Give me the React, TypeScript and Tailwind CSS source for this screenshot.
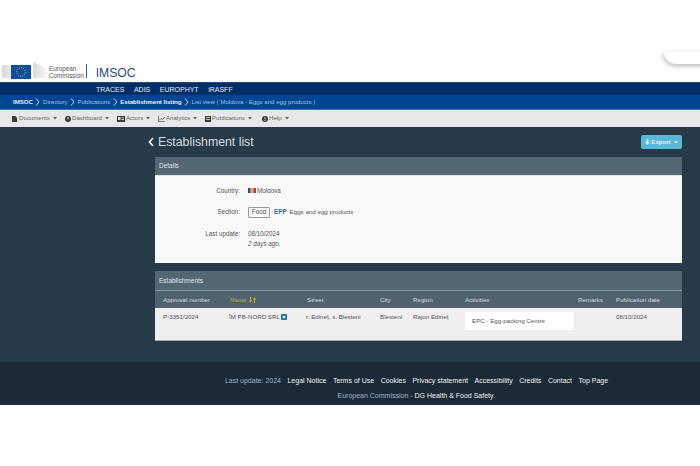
import React from "react";

const font = "font-['Liberation_Sans',Arial,sans-serif]";

function Logo() {
  return (
    <svg width="46" height="18" viewBox="0 0 46 18" className="block">
      <defs>
        <linearGradient id="g1" x1="0" x2="1" y1="0" y2="0">
          <stop offset="0" stopColor="#d9d9d9" />
          <stop offset="1" stopColor="#e8e8e8" />
        </linearGradient>
        <linearGradient id="g2" x1="0" x2="1" y1="0" y2="0">
          <stop offset="0" stopColor="#d8d8d8" />
          <stop offset="1" stopColor="#f8f8f8" />
        </linearGradient>
      </defs>
      <rect x="0" y="3" width="10" height="13" fill="url(#g1)" />
      <rect x="9" y="3" width="20" height="14" fill="#0f4f9e" />
      <circle cx="19" cy="10" r="4.3" fill="none" stroke="#c9c46a" strokeWidth="1" strokeDasharray="1 1.2" />
      <path d="M31 0 L38 3 L45 7 L45 16 L31 16 Z" fill="url(#g2)" />
    </svg>
  );
}

function Sep() {
  return (
    <svg width="5" height="8" viewBox="0 0 5 8" className="mx-[2.5px]">
      <path d="M1 0.5 L4 4 L1 7.5" fill="none" stroke="#c7d9ee" strokeWidth="1" />
    </svg>
  );
}

function Caret({ color = "#666" }: { color?: string }) {
  return (
    <svg width="4" height="2.5" viewBox="0 0 4 2.5" className="ml-[3px]">
      <path d="M0 0 H4 L2 2.5 Z" fill={color} />
    </svg>
  );
}

const ico = "#3a3a3a";

function Th({ w, children }: { w: string; children: React.ReactNode }) {
  return <div className={`${w} shrink-0`}>{children}</div>;
}

export default function App() {
  return (
    <div className={`relative flex h-[466px] w-[700px] flex-col overflow-hidden bg-white ${font}`}>
      {/* stray shadow top right */}
      <div className="absolute left-[664px] top-[52px] h-[12px] w-[60px] rounded-bl-[14px] bg-white shadow-[-1px_2px_5px_rgba(0,0,0,0.28)]" />

      {/* Header */}
      <div className="flex h-[82px] items-end pb-[2px] pl-[2px]">
        <Logo />
        <div className="ml-[1px] flex flex-col pb-[1px] text-[6.3px] leading-[7px] text-[#555]">
          <span>European</span>
          <span>Commission</span>
        </div>
        <div className="ml-[2px] mb-[2px] h-[14px] w-px bg-[#2a5c96]" />
        <span className="ml-[9px] text-[12.2px] leading-[14px] text-[#1f4e86]">IMSOC</span>
      </div>

      {/* Top nav */}
      <div className="flex h-[13px] items-center gap-[9.5px] border-t border-[#1c4f80] bg-[#002f67] pl-[96px] text-[7px] leading-none text-[#e3ecf5]">
        <span>TRACES</span>
        <span>ADIS</span>
        <span>EUROPHYT</span>
        <span>iRASFF</span>
      </div>

      {/* Breadcrumb */}
      <div className="flex h-[15px] items-center border-b border-[#3f76ab] bg-[#004494] pl-[13px] text-[6.1px] leading-none text-[#a9c3e2]">
        <span className="font-bold text-[#e3ecf5]">IMSOC</span>
        <Sep />
        <span>Directory</span>
        <Sep />
        <span>Publications</span>
        <Sep />
        <span className="font-bold text-[#eef3f9]">Establishment listing</span>
        <Sep />
        <span>List view ( Moldova - Eggs and egg products )</span>
      </div>

      {/* Menu */}
      <div className="flex h-[17px] items-center bg-[#e8e7e8] pl-[12px] text-[6.1px] leading-none text-[#666]">
        <div className="flex w-[53px] items-center">
          <svg width="5" height="6" viewBox="0 0 5 6" className="mr-[2px]">
            <path d="M0 0 H3.2 L5 1.8 V6 H0 Z" fill={ico} />
          </svg>
          <span>Documents</span>
          <Caret />
        </div>
        <div className="flex w-[52px] items-center">
          <svg width="6" height="6" viewBox="0 0 6 6" className="mr-[1px]">
            <circle cx="3" cy="3" r="3" fill={ico} />
            <rect x="2.5" y="1" width="1" height="2.5" fill="#e8e7e8" />
          </svg>
          <span>Dashboard</span>
          <Caret />
        </div>
        <div className="flex w-[41px] items-center">
          <svg width="8" height="6" viewBox="0 0 8 6" className="mr-[1px]">
            <rect width="8" height="6" fill={ico} />
            <rect x="1" y="1" width="2.5" height="3" fill="#e8e7e8" />
            <rect x="4.5" y="1.5" width="2.5" height="0.8" fill="#e8e7e8" />
            <rect x="4.5" y="3.2" width="2.5" height="0.8" fill="#e8e7e8" />
          </svg>
          <span>Actors</span>
          <Caret />
        </div>
        <div className="flex w-[47px] items-center">
          <svg width="7" height="6" viewBox="0 0 7 6" className="mr-[1px]">
            <path d="M0.5 0 V5.5 H7 M1 4.5 L3 2.5 L4.5 3.5 L7 1" fill="none" stroke="#555" strokeWidth="0.7" />
          </svg>
          <span>Analytics</span>
          <Caret />
        </div>
        <div className="flex w-[57px] items-center">
          <svg width="6" height="6" viewBox="0 0 6 6" className="mr-[1px]">
            <rect width="6" height="6" rx="0.5" fill={ico} />
            <rect x="1" y="1" width="4" height="0.8" fill="#e8e7e8" />
            <rect x="1" y="3" width="4" height="0.8" fill="#e8e7e8" />
          </svg>
          <span>Publications</span>
          <Caret />
        </div>
        <div className="flex items-center">
          <svg width="6" height="6" viewBox="0 0 6 6" className="mr-[1px]">
            <circle cx="3" cy="3" r="3" fill={ico} />
            <rect x="2.5" y="1.2" width="1" height="2.2" fill="#e8e7e8" />
            <rect x="2.5" y="4" width="1" height="0.9" fill="#e8e7e8" />
          </svg>
          <span>Help</span>
          <Caret />
        </div>
      </div>

      {/* Main */}
      <div className="h-[235px] bg-[#263a47] pl-[147px] pr-[18px]">
        <div className="flex h-[30px] items-center justify-between">
          <div className="flex items-center pt-[1px]">
            <svg width="6" height="10" viewBox="0 0 6 10" className="ml-[1px]">
              <path d="M5 1 L1.5 5 L5 9" fill="none" stroke="#f2f4f6" strokeWidth="1.7" />
            </svg>
            <span className="ml-[4px] text-[12.3px] leading-none text-[#d4dde3]">Establishment list</span>
          </div>
          <div className="flex h-[14px] w-[41px] items-center justify-center rounded-[2px] bg-[#58b8d8] text-[6.1px] font-bold leading-none text-[#e8f4f9]">
            <svg width="5" height="6" viewBox="0 0 5 6" className="mr-[1px]">
              <path d="M1.7 0 H3.3 V2.8 H5 L2.5 6 L0 2.8 H1.7 Z" fill="#e8f4f9" />
            </svg>
            Export
            <Caret color="#e8f4f9" />
          </div>
        </div>

        {/* Details */}
        <div className="ml-[8px] flex h-[106px] flex-col">
          <div className="flex h-[19px] items-center border-b border-[#e0e3e5] bg-[#546772] pl-[4px] pt-[1px] text-[6.5px] leading-none text-[#dfe5e9]">
            Details
          </div>
          <div className="flex-1 bg-[#f9f9f9] pt-[11px] text-[6.3px] leading-none text-[#555]">
            <div className="flex h-[8px] items-center">
              <span className="w-[85px] text-right">Country:</span>
              <span className="ml-[8px] flex items-center">
                <svg width="8" height="5" viewBox="0 0 8 5">
                  <rect width="2.7" height="5" fill="#2a4a9a" />
                  <rect x="2.7" width="2.7" height="5" fill="#d8b93a" />
                  <rect x="5.4" width="2.6" height="5" fill="#c62f3a" />
                </svg>
                <span className="ml-[1px]">Moldova</span>
              </span>
            </div>
            <div className="mt-[11px] flex h-[13px] items-center">
              <span className="w-[85px] text-right">Section:</span>
              <span className="ml-[8px] flex h-[11px] w-[22px] items-center justify-center rounded-[1px] border border-[#999]">
                Food
              </span>
              <span className="ml-[4px] font-bold text-[#336b8f]">EPP</span>
              <span className="ml-[3px] text-[6.2px]">Eggs and egg products</span>
            </div>
            <div className="mt-[10px] flex items-start">
              <span className="flex h-[10px] w-[85px] items-center justify-end">Last update:</span>
              <div className="ml-[8px] flex flex-col">
                <span className="flex h-[10px] items-center">08/10/2024</span>
                <span className="flex h-[10px] items-center italic">2 days ago.</span>
              </div>
            </div>
          </div>
        </div>

        {/* Establishments */}
        <div className="ml-[8px] mt-[8px] flex h-[70px] flex-col">
          <div className="flex h-[20px] items-center border-b border-[#8a9ba6] bg-[#546772] pl-[4px] pt-[1px] text-[6.5px] leading-none text-[#dfe5e9]">
            Establishments
          </div>
          <div className="flex h-[17px] items-center bg-[#4f626e] pl-[8px] pt-[1px] text-[6.2px] leading-none text-[#d5dde2]">
            <Th w="w-[67px]">Approval number</Th>
            <Th w="w-[77px]">
              <span className="flex items-center text-[#c9a93a]">
                Name
                <svg width="7" height="6" viewBox="0 0 7 6" className="ml-[2px]">
                  <path d="M1 0 H2.2 V3.5 H3.2 L1.6 6 L0 3.5 H1 Z M4.8 6 H6 V2.5 H7 L5.4 0 L3.8 2.5 H4.8 Z" fill="#c9a93a" />
                </svg>
              </span>
            </Th>
            <Th w="w-[73px]">Street</Th>
            <Th w="w-[33px]">City</Th>
            <Th w="w-[52px]">Region</Th>
            <Th w="w-[113px]">Activities</Th>
            <Th w="w-[38px]">Remarks</Th>
            <Th w="w-[60px]">Publication date</Th>
          </div>
          <div className="flex flex-1 items-start border-b border-[#a6adb2] bg-[#efefef] pl-[8px] pt-[5px] text-[6.2px] leading-[8px] text-[#555]">
            <Th w="w-[66px]">P-3351/2024</Th>
            <Th w="w-[77px]">
              <span className="flex items-center">
                ÎM PB-NORD SRL
                <svg width="6" height="6" viewBox="0 0 6 6" className="ml-[1px]">
                  <rect width="6" height="6" rx="1" fill="#1f6fb0" />
                  <rect x="1.8" y="1.8" width="2.4" height="2.4" fill="#f2f6fa" />
                </svg>
              </span>
            </Th>
            <Th w="w-[74px]">r. Edineț, s. Blesteni</Th>
            <Th w="w-[33px]">Blesteni</Th>
            <Th w="w-[52px]">Rajon Edineț</Th>
            <div className="w-[113px] shrink-0">
              <div className="-mt-[1px] flex h-[18px] w-[109px] items-center rounded-[1px] bg-white pl-[7px]">
                EPC - Egg-packing Centre
              </div>
            </div>
            <Th w="w-[38px]">{""}</Th>
            <Th w="w-[60px]">08/10/2024</Th>
          </div>
        </div>
      </div>

      {/* Footer */}
      <div className="flex h-[43px] flex-col items-center bg-[#1a2a36] pl-[133px] text-[7px] leading-none">
        <div className="mt-[15px] flex gap-[6.5px] text-[#eef1f3]">
          <span className="text-[#9fb3c4]">Last update: 2024</span>
          <span>Legal Notice</span>
          <span>Terms of Use</span>
          <span>Cookies</span>
          <span>Privacy statement</span>
          <span>Accessibility</span>
          <span>Credits</span>
          <span>Contact</span>
          <span>Top Page</span>
        </div>
        <div className="mt-[8px] flex text-[#9fb3c4]">
          <span>European Commission -&nbsp;</span>
          <span className="text-[#eef1f3]">DG Health &amp; Food Safety</span>
          <span>.</span>
        </div>
      </div>
    </div>
  );
}
